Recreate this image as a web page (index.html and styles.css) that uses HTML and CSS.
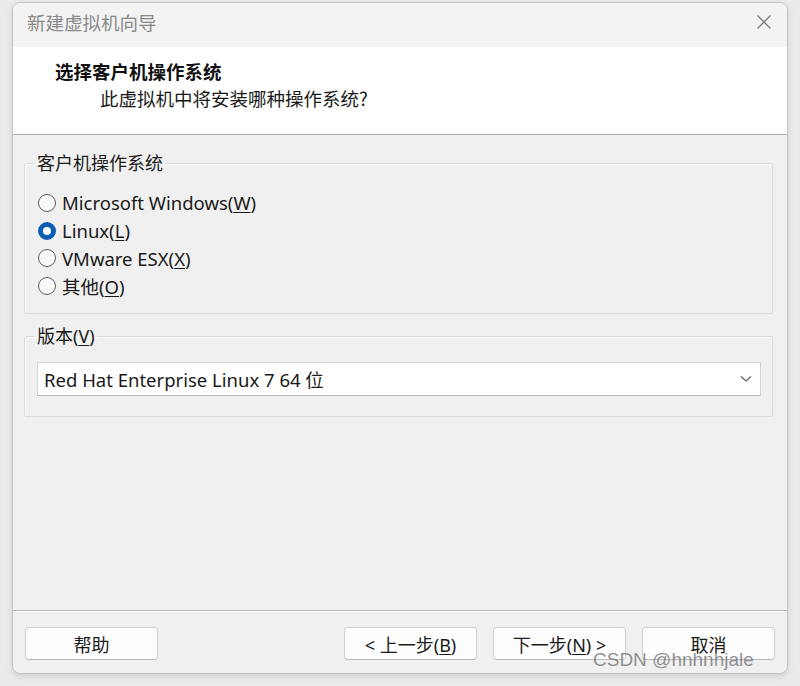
FILE: index.html
```html
<!DOCTYPE html>
<html lang="zh-CN">
<head>
<meta charset="utf-8">
<link rel="stylesheet" href="styles.css">
</head>
<body>
<div class="window">
  <div class="titlebar">
    <span class="title">新建虚拟机向导</span>
    <svg class="close" width="16" height="16" viewBox="0 0 16 16"><path d="M1.5 1.5 L14.5 14.5 M14.5 1.5 L1.5 14.5" stroke="#7a7a7a" stroke-width="1.3" fill="none"/></svg>
  </div>
  <div class="header">
    <div class="h-title">选择客户机操作系统</div>
    <div class="h-sub">此虚拟机中将安装哪种操作系统?</div>
  </div>
  <div class="content">
    <fieldset class="group g1">
      <legend>客户机操作系统</legend>
      <div class="radio"><span class="dot"></span><span>Microsoft Windows(<u>W</u>)</span></div>
      <div class="radio"><span class="dot on"></span><span>Linux(<u>L</u>)</span></div>
      <div class="radio"><span class="dot"></span><span>VMware ESX(<u>X</u>)</span></div>
      <div class="radio"><span class="dot"></span><span>其他(<u>O</u>)</span></div>
    </fieldset>
    <fieldset class="group g2">
      <legend>版本(<u>V</u>)</legend>
      <div class="select">
        <span>Red Hat Enterprise Linux 7 64 位</span>
        <svg width="12" height="8" viewBox="0 0 12 8"><path d="M1 1.5 L6 6 L11 1.5" stroke="#606060" stroke-width="1.3" fill="none"/></svg>
      </div>
    </fieldset>
  </div>
  <div class="footer">
    <button class="btn">帮助</button>
    <span class="spacer"></span>
    <button class="btn">&lt; 上一步(<u>B</u>)</button>
    <button class="btn">下一步(<u>N</u>) &gt;</button>
    <button class="btn">取消</button>
  </div>
  <div class="watermark">CSDN @hnhnhjale</div>
</div>
</body>
</html>
```

FILE: styles.css
```css
html, body {
  margin: 0;
  padding: 0;
}
body {
  background: #ebebeb;
  width: 800px;
  height: 686px;
  overflow: hidden;
  font-family: "Noto Sans", "Noto Sans CJK SC", sans-serif;
  font-size: 18.5px;
  color: #1a1a1a;
}
.window {
  position: relative;
  margin: 2px 0 0 12px;
  width: 774px;
  height: 670px;
  border: 1px solid #c4c4c4;
  border-radius: 8px;
  background: #f0f0f0;
  overflow: hidden;
  box-shadow: 0 2px 6px rgba(0,0,0,0.12);
  display: flex;
  flex-direction: column;
}
.titlebar {
  height: 44px;
  flex: none;
  background: #f3f3f3;
  display: flex;
  align-items: center;
  justify-content: space-between;
  padding: 0 15px 0 14px;
}
.title {
  color: #8a8a8a;
  font-family: "Noto Sans CJK SC", sans-serif;
  font-size: 18.5px;
  margin-top: -6px;
}
.close {
  margin-top: -6px;
}
.header {
  height: 88px;
  flex: none;
  background: #ffffff;
  border-bottom: 1px solid #a8a8a8;
  box-sizing: border-box;
  padding: 11px 0 0 42px;
  font-family: "Noto Sans CJK SC", sans-serif;
  font-size: 18.5px;
}
.h-title {
  font-weight: bold;
  line-height: 26px;
  color: #111;
}
.h-sub {
  padding-left: 45px;
  line-height: 28px;
  color: #1a1a1a;
}
.content {
  flex: 1;
  padding: 17px 14px 0 11px;
  border-bottom: 1px solid #b8b8b8;
  box-shadow: 0 1px 0 #ffffff;
}
.group {
  margin: 0;
  border: 1px solid #dcdcdc;
  border-radius: 2px;
  box-shadow: inset 1px 1px 0 #fafafa;
  padding-left: 10px;
}
.group legend {
  padding: 0 2px;
  margin-left: 0;
  font-family: "Noto Sans", "Noto Sans CJK SC", sans-serif;
  font-size: 18px;
  line-height: 22px;
}
.g1 {
  box-sizing: border-box;
  height: 162px;
  padding-top: 15px;
  padding-right: 0;
}
.radio {
  height: 27.7px;
  display: flex;
  align-items: center;
  gap: 6px;
  margin-left: 3px;
}
.dot {
  width: 18px;
  height: 18px;
  border: 1.4px solid #5c5c5c;
  border-radius: 50%;
  box-sizing: border-box;
  background: #f8f8f8;
  flex: none;
}
.dot.on {
  border: 5.5px solid #0a5fb4;
  background: #ffffff;
}
.g2 {
  margin-top: 11px;
  box-sizing: border-box;
  height: 92px;
  padding-top: 15px;
  padding-right: 11px;
}
.select {
  height: 34px;
  background: #ffffff;
  border: 1px solid #d4d4d4;
  border-bottom-color: #bdbdbd;
  box-sizing: border-box;
  display: flex;
  align-items: center;
  justify-content: space-between;
  padding: 0 8px 0 6px;
  margin-left: 2px;
}
.footer {
  height: 62px;
  flex: none;
  display: flex;
  align-items: center;
  padding: 0 12px 0 12px;
  gap: 16px;
  box-sizing: border-box;
  padding-top: 3px;
}
.spacer {
  flex: 1;
}
.btn {
  width: 133px;
  height: 33px;
  background: #fdfdfd;
  border: 1px solid #d0d0d0;
  border-bottom-color: #b8b8b8;
  border-radius: 4px;
  font-family: "Noto Sans", "Noto Sans CJK SC", sans-serif;
  font-size: 18px;
  color: #1a1a1a;
  padding: 0;
}
u {
  text-decoration-thickness: 1px;
  text-underline-offset: 2px;
}
.watermark {
  position: absolute;
  left: 580px;
  top: 646px;
  font-family: "Liberation Sans", Arial, sans-serif;
  font-size: 19px;
  color: rgba(110,110,110,0.75);
  white-space: nowrap;
}
```
